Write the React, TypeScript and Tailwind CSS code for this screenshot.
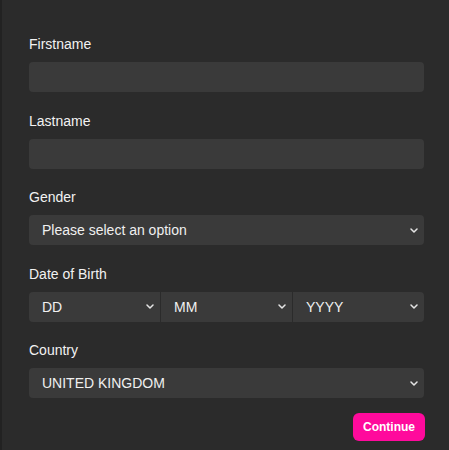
import React from "react";

function Chevron() {
  return (
    <svg width="8" height="5" viewBox="0 0 8 5" fill="none" className="shrink-0">
      <path d="M1 1l3 3 3-3" stroke="#e5e5e5" strokeWidth="1.5" strokeLinecap="round" strokeLinejoin="round" />
    </svg>
  );
}

function Select({ value, className = "" }: { value: string; className?: string }) {
  return (
    <div className={`flex h-[30px] items-center justify-between bg-[#3a3a3a] pl-[13px] pr-[6px] ${className}`}>
      <span className="text-[14px] leading-none text-[#f0f0f0]">{value}</span>
      <Chevron />
    </div>
  );
}

function Label({ children }: { children: React.ReactNode }) {
  return <div className="mb-[7px] text-[14px] leading-[21px] text-[#f2f2f2]">{children}</div>;
}

export default function App() {
  return (
    <div className="h-[450px] w-full border-l-2 border-[#222222] bg-[#2b2b2b] pl-[27px] pr-[25px] pt-[34px] font-['Liberation_Sans',Arial,sans-serif]">
      <div className="flex flex-col gap-[18.5px]">
        <div>
          <Label>Firstname</Label>
          <input className="block h-[30px] w-full rounded-[4px] bg-[#3a3a3a] outline-none" />
        </div>
        <div>
          <Label>Lastname</Label>
          <input className="block h-[30px] w-full rounded-[4px] bg-[#3a3a3a] outline-none" />
        </div>
        <div>
          <Label>Gender</Label>
          <Select value="Please select an option" className="rounded-[4px]" />
        </div>
        <div>
          <Label>Date of Birth</Label>
          <div className="flex gap-[1px]">
            <Select value="DD" className="flex-1 rounded-l-[4px]" />
            <Select value="MM" className="flex-1" />
            <Select value="YYYY" className="flex-1 rounded-r-[4px]" />
          </div>
        </div>
        <div>
          <Label>Country</Label>
          <Select value="UNITED KINGDOM" className="rounded-[4px]" />
        </div>
      </div>
      <div className="mt-[15px] flex justify-end">
        <button className="mr-[-1px] h-[28px] w-[72px] rounded-[6px] bg-[#ff0a9c] text-[12px] font-bold text-white">
          Continue
        </button>
      </div>
    </div>
  );
}
